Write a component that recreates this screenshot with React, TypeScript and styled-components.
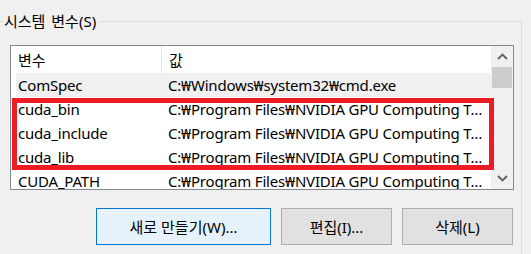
import { FC } from 'react'
import styled, { createGlobalStyle } from 'styled-components'

type EnvVar = {
	name: string
	value: string
}

const vars: EnvVar[] = [
	{ name: 'ComSpec', value: 'C:₩Windows₩system32₩cmd.exe' },
	{ name: 'cuda_bin', value: 'C:₩Program Files₩NVIDIA GPU Computing T…' },
	{ name: 'cuda_include', value: 'C:₩Program Files₩NVIDIA GPU Computing T…' },
	{ name: 'cuda_lib', value: 'C:₩Program Files₩NVIDIA GPU Computing T…' },
	{ name: 'CUDA_PATH', value: 'C:₩Program Files₩NVIDIA GPU Computing T…' },
]

const GlobalStyle = createGlobalStyle`
	html, body {
		margin: 0;
		padding: 0;
		background: #f0f0f0;
	}
	body {
		font-family: 'Noto Sans', 'Noto Sans CJK KR', sans-serif;
		font-size: 15px;
		color: #000;
	}
`

const Chevron: FC<{ down?: boolean }> = ({ down }) => (
	<svg width='11' height='7' viewBox='0 0 11 7'>
		<path
			d={down ? 'M1 1 L5.5 5.5 L10 1' : 'M1 6 L5.5 1.5 L10 6'}
			fill='none'
			stroke='#606060'
			strokeWidth='1.8'
		/>
	</svg>
)

const App: FC = () => (
	<>
		<GlobalStyle />
		<Page>
			<Group>
				<Legend>시스템 변수(S)</Legend>
				<ListBox>
					<Viewport>
						<Header>
							<HeaderCell>변수</HeaderCell>
							<HeaderCell>값</HeaderCell>
						</Header>
						{vars.map((v, i) => (
							<Row key={v.name} $selected={i === 0}>
								<NameCell>{v.name}</NameCell>
								<ValueCell>{v.value}</ValueCell>
							</Row>
						))}
					</Viewport>
					<ScrollBar>
						<ArrowButton>
							<Chevron />
						</ArrowButton>
						<Thumb />
						<Track />
						<ArrowButton>
							<Chevron down />
						</ArrowButton>
					</ScrollBar>
					<Highlight />
				</ListBox>
				<ButtonRow>
					<Button $primary $wide>
						새로 만들기(W)...
					</Button>
					<Button>편집(I)...</Button>
					<Button>삭제(L)</Button>
				</ButtonRow>
			</Group>
		</Page>
	</>
)

export default App

const Page = styled.div`
	width: 531px;
	height: 254px;
	overflow: hidden;
	padding-top: 21px;
	box-sizing: border-box;
`

const Group = styled.section`
	width: 522px;
	height: 260px;
	box-sizing: border-box;
	border-top: 1px solid #dcdcdc;
	border-right: 1px solid #dcdcdc;
`

const Legend = styled.div`
	display: inline-block;
	margin: -11px 0 0 3px;
	padding: 0 3px 0 1px;
	height: 20px;
	line-height: 20px;
	background: #f0f0f0;
	word-spacing: 2px;
	vertical-align: top;
`

const ListBox = styled.div`
	position: relative;
	margin: 3px 0 0 10px;
	width: 504px;
	height: 145px;
	box-sizing: border-box;
	border: 1px solid #828790;
	background: #fff;
	display: flex;
`

const Viewport = styled.div`
	width: 480px;
	overflow: hidden;
`

const Header = styled.div`
	display: grid;
	grid-template-columns: 150px 1fr;
	height: 27px;
	background: #fff;
`

const HeaderCell = styled.div`
	padding-left: 7px;
	line-height: 28px;
	font-family: 'Noto Sans CJK KR', sans-serif;
	white-space: nowrap;
	& + & {
		border-left: 1px solid #e5e5e5;
	}
`

const Row = styled.div<{ $selected?: boolean }>`
	display: grid;
	grid-template-columns: 145px 1fr;
	margin-left: 5px;
	height: 24px;
	line-height: 24px;
	letter-spacing: -0.2px;
	background: ${(p) => (p.$selected ? '#f0f0f0' : '#fff')};
	white-space: nowrap;
`

const NameCell = styled.div`
	padding-left: 2px;
	overflow: hidden;
`

const ValueCell = styled.div`
	padding-left: 7px;
	overflow: hidden;
`

const ScrollBar = styled.div`
	flex: 1;
	display: flex;
	flex-direction: column;
	background: #f0f0f0;
	padding-left: 1px;
`

const ArrowButton = styled.div`
	height: 21px;
	display: flex;
	align-items: center;
	justify-content: center;
`

const Thumb = styled.div`
	height: 21px;
	background: #cdcdcd;
	margin-right: 1px;
`

const Track = styled.div`
	flex: 1;
`

const Highlight = styled.div`
	position: absolute;
	left: 1px;
	top: 52px;
	width: 482px;
	height: 72px;
	box-sizing: border-box;
	border: 5px solid #ed1c24;
	pointer-events: none;
`

const ButtonRow = styled.div`
	display: flex;
	justify-content: flex-end;
	gap: 10px;
	width: 513px;
	margin-top: 18px;
`

const Button = styled.button<{ $primary?: boolean; $wide?: boolean }>`
	width: ${(p) => (p.$wide ? '175px' : '111px')};
	height: 37px;
	box-sizing: border-box;
	border: 1px solid ${(p) => (p.$primary ? '#0078d7' : '#adadad')};
	background: ${(p) => (p.$primary ? '#e5f1fb' : '#e1e1e1')};
	font-family: 'Noto Sans', 'Noto Sans CJK KR', sans-serif;
	font-size: 15px;
	color: #000;
	padding: 0;
`
